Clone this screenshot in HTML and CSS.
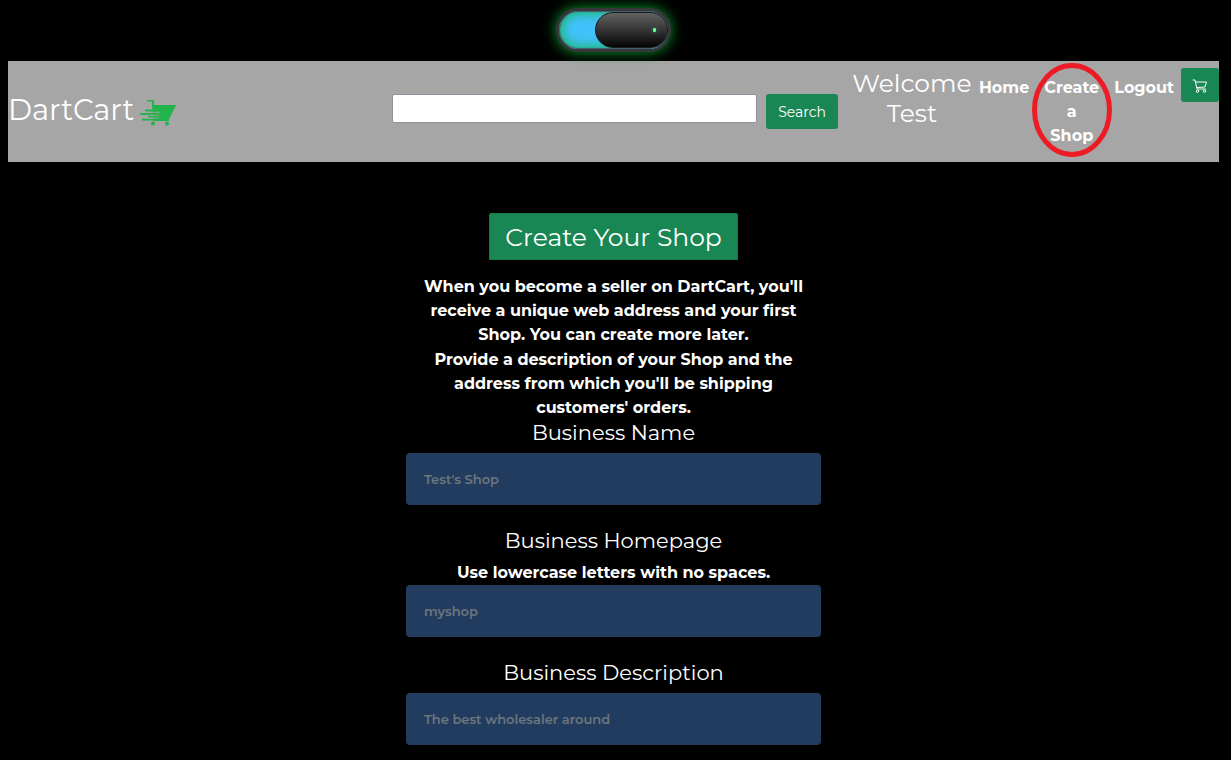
FILE: index.html
```html
<!DOCTYPE html>
<html lang="en">
<head>
<meta charset="utf-8">
<meta name="viewport" content="width=device-width, initial-scale=1">
<title>DartCart</title>
<link rel="stylesheet" href="styles.css">
</head>
<body>
<div class="theme-bar">
  <label class="toggle">
    <input class="toggle-input" type="checkbox" role="switch" aria-label="Dark mode" checked>
    <span class="toggle-knob"><span class="toggle-light"></span></span>
  </label>
</div>
<header class="navbar">
  <a class="brand" href="#">
    <span>DartCart</span>
    <svg class="brand-logo" viewBox="0 0 37 27" fill="#22b34c" aria-hidden="true">
      <path d="M7 1h7v5h22l-7 14.500v1.500H13.500v-1.500L12 7V2.500H7z"/>
      <path d="M5 10.500h14v2H5zM0 14h19v2H0zM8 16.500h12v2H8zM2 19.500h17v2H2z"/>
      <path d="M9 13.300h11M7 16.300h12M5 19h14" stroke="#a6a6a6" stroke-width=".8"/>
      <circle cx="13" cy="24.500" r="2"/><circle cx="27" cy="24.500" r="2"/>
    </svg>
  </a>
  <form class="search" role="search">
    <input class="search-input" type="search" aria-label="Search products">
    <button class="button" type="button">Search</button>
  </form>
  <nav class="menu">
    <h2 class="welcome">Welcome Test</h2>
    <a class="menu-link" href="#">Home</a>
    <a class="menu-link menu-create" href="#">Create a Shop
      <svg class="ring" viewBox="0 0 80 94" aria-hidden="true"><ellipse cx="40" cy="47" rx="37.500" ry="44.500" fill="none" stroke="#ed1c24" stroke-width="5"/></svg>
    </a>
    <a class="menu-link" href="#">Logout</a>
    <button class="button cart" type="button" aria-label="Cart">
      <svg class="cart-icon" viewBox="0 0 16 16" fill="none" stroke="#fff" stroke-linejoin="round" stroke-linecap="round" aria-hidden="true">
        <path d="M1 3h2l2 9h8.500M3.500 5h11l-1.500 5L4.800 10.500"/>
        <circle cx="5.500" cy="14.200" r="1.200"/><circle cx="12.500" cy="14.200" r="1.200"/>
      </svg>
    </button>
  </nav>
</header>
<main class="shop">
  <h1 class="shop-title">Create Your Shop</h1>
  <p class="intro">When you become a seller on DartCart, you'll<br>receive a unique web address and your first<br>Shop. You can create more later.</p>
  <p class="intro">Provide a description of your Shop and the<br>address from which you'll be shipping<br>customers' orders.</p>
  <form class="fields">
    <div class="field">
      <label class="field-label" for="name">Business Name</label>
      <input class="field-input" id="name" type="text" placeholder="Test's Shop">
    </div>
    <div class="field">
      <label class="field-label" for="homepage">Business Homepage</label>
      <p class="hint" id="homepage-hint">Use lowercase letters with no spaces.</p>
      <input class="field-input" id="homepage" type="text" placeholder="myshop" aria-describedby="homepage-hint">
    </div>
    <div class="field">
      <label class="field-label" for="description">Business Description</label>
      <input class="field-input" id="description" type="text" placeholder="The best wholesaler around">
    </div>
  </form>
</main>
</body>
</html>
```

FILE: styles.css
```css
* { box-sizing: border-box; }

body {
  margin: 0;
  padding: 8px 12px 8px 8px;
  background: #000;
  color: #fff;
  font: 700 16px/24px Montserrat, Inter, sans-serif;
}

h1, h2, p { margin: 0; }
a { color: inherit; text-decoration: none; }
input, button { font: inherit; }

.theme-bar {
  display: flex;
  justify-content: center;
  height: 53px;
}

.toggle {
  display: flex;
  justify-content: flex-end;
  position: relative;
  width: 115px;
  height: 44px;
  border: 3px solid #37373b;
  border-radius: 22px;
  padding: 1px 0;
  background: #42c2fb;
  box-shadow: 0 0 14px #0a9a2a, inset 0 0 1px 1px #48586a, inset 0 0 12px 2px #12b450;
}

.toggle-input {
  position: absolute;
  inset: 0;
  margin: 0;
  opacity: 0;
}

.toggle-knob {
  display: flex;
  align-items: center;
  justify-content: flex-end;
  width: 73px;
  padding-right: 11px;
  border: 1px solid #171c20;
  border-radius: 18px;
  background: linear-gradient(#636363, #050505);
}

.toggle-light {
  width: 3px;
  height: 4px;
  border-radius: 1px;
  background: #62ff78;
  box-shadow: 0 0 4px #268ca0;
}

.navbar {
  display: grid;
  grid-template-columns: 384fr 446fr 381fr;
  min-height: 101px;
  background: #a6a6a6;
}

.brand {
  display: flex;
  align-items: center;
  gap: 6px;
  font-size: 29px;
  font-weight: 400;
  line-height: 36px;
  padding-bottom: 4px;
}

.brand-logo { width: 37px; height: 27px; margin-top: 6px; }

.search {
  display: flex;
  align-items: flex-start;
  gap: 9px;
  padding-top: 33px;
}

.search-input {
  flex: 1;
  min-width: 0;
  height: 29px;
  border: 1px solid #8f8f9d;
  border-radius: 2px;
  background: #fff;
}

.button {
  height: 35px;
  padding: 0 12px;
  border: 0;
  border-radius: 3px;
  background: #198754;
  color: #fff;
  font-size: 14px;
  font-weight: 400;
}

.menu {
  display: flex;
  align-items: flex-start;
  gap: 7px;
  padding: 7px 0 0 14px;
  text-align: center;
}

.welcome {
  flex: 1;
  font-size: 25px;
  font-weight: 400;
  line-height: 30px;
}

.menu-link { padding-top: 8px; }

.menu-create {
  position: relative;
  width: 71px;
  padding-left: 7px;
  padding-right: 7px;
}

.ring {
  position: absolute;
  top: -5px;
  left: -4px;
  width: 80px;
  height: 94px;
}

.cart { height: 34px; padding: 0 11px; }
.cart-icon { display: block; width: 16px; height: 16px; }

.shop {
  width: 415px;
  max-width: 100%;
  margin: 0 auto;
  padding-top: 51px;
  text-align: center;
}

.shop-title {
  width: fit-content;
  margin: 0 auto 15px;
  padding: 8px 15px 7px;
  border: 1px solid #167a4b;
  border-radius: 2px 2px 0 0;
  background: #198754;
  font-size: 25px;
  font-weight: 400;
  line-height: 30px;
}

.intro + .intro { margin-top: 1px; }

.fields {
  display: grid;
  gap: 23px;
}

.field-label {
  display: block;
  margin-bottom: 7px;
  font-size: 21px;
  font-weight: 400;
  line-height: 26px;
}

.hint { line-height: 24px; }

.field-input {
  display: block;
  width: 100%;
  height: 52px;
  padding: 0 18px;
  border: 0;
  border-radius: 4px;
  background: #223c60;
  color: #fff;
  font-size: 13px;
  font-weight: 600;
}

.field-input::placeholder { color: #6c757d; opacity: 1; }
```
